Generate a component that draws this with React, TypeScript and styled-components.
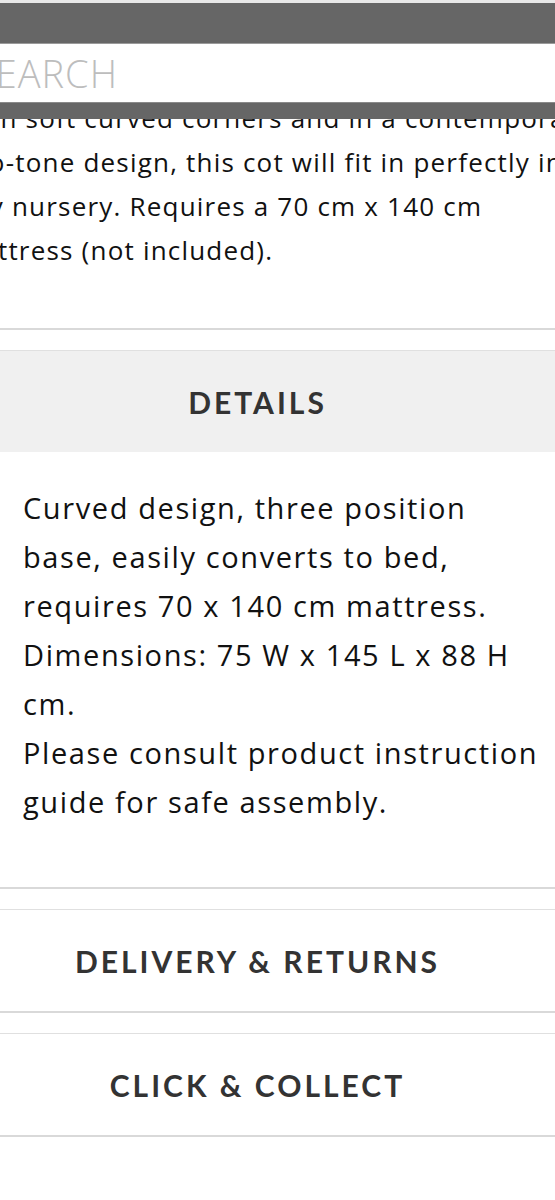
import styled, { createGlobalStyle } from 'styled-components';

const GlobalStyle = createGlobalStyle`
  html, body {
    margin: 0;
    padding: 0;
    background: #fff;
  }
  body {
    font-family: 'Open Sans', Lato, sans-serif;
    color: #111;
    overflow-x: hidden;
  }
`;

const descriptionLines = [
  'With soft curved corners and in a contemporary',
  'two-tone design, this cot will fit in perfectly in',
  'any nursery. Requires a 70 cm x 140 cm',
  'mattress (not included).',
];

const detailLines = [
  'Curved design, three position',
  'base, easily converts to bed,',
  'requires 70 x 140 cm mattress.',
  'Dimensions: 75 W x 145 L x 88 H',
  'cm.',
  'Please consult product instruction',
  'guide for safe assembly.',
];

export default function App() {
  return (
    <Page>
      <GlobalStyle />
      <Header>
        <TopStrip />
        <DarkBar />
        <SearchField>
          <SearchInput placeholder="SEARCH" readOnly />
        </SearchField>
        <DarkBar $short />
      </Header>

      <Description>
        {descriptionLines.map((line) => (
          <Line key={line}>{line}</Line>
        ))}
      </Description>

      <Accordion>
        <Item>
          <ItemHeader $open>DETAILS</ItemHeader>
          <ItemBody>
            {detailLines.map((line) => (
              <Line key={line}>{line}</Line>
            ))}
          </ItemBody>
        </Item>
        <Item>
          <ItemHeader>DELIVERY &amp; RETURNS</ItemHeader>
        </Item>
        <Item>
          <ItemHeader>CLICK &amp; COLLECT</ItemHeader>
        </Item>
      </Accordion>
    </Page>
  );
}

const Page = styled.div`
  position: relative;
  width: 555px;
  min-height: 1200px;
  overflow: hidden;
  background: #fff;
`;

const Header = styled.header`
  position: absolute;
  top: 0;
  left: 0;
  right: 0;
  z-index: 2;
  display: flex;
  flex-direction: column;
`;

const TopStrip = styled.div`
  height: 3px;
  background: #e8e8e8;
`;

const DarkBar = styled.div<{ $short?: boolean }>`
  height: ${(p) => (p.$short ? '16px' : '40px')};
  background: #666;
  border-top: ${(p) => (p.$short ? '1px solid #8a8a8a' : 'none')};
`;

const SearchField = styled.div`
  height: 58px;
  background: #fff;
  border-top: 1px solid #9a9a9a;
  display: flex;
  align-items: center;
  margin-left: -26px;
`;

const SearchInput = styled.input`
  border: none;
  outline: none;
  background: transparent;
  width: 100%;
  padding: 0;
  font-family: 'Open Sans', Lato, sans-serif;
  font-weight: 300;
  font-size: 38px;
  letter-spacing: 1px;
  color: #bdbdbd;

  &::placeholder {
    color: #bdbdbd;
  }
`;

const Description = styled.div`
  margin-left: -43px;
  padding-top: 96px;
  padding-bottom: 56px;
  border-bottom: 2px solid #d9d9d9;
  font-size: 26px;
  line-height: 44px;
  letter-spacing: 1.2px;
  white-space: nowrap;
  color: #111;
`;

const Line = styled.span`
  display: block;
`;

const Accordion = styled.div`
  display: flex;
  flex-direction: column;
`;

const Item = styled.section`
  margin-top: 20px;
  border-top: 1px solid #e0e0e0;
  border-bottom: 2px solid #d9d9d9;
`;

const ItemHeader = styled.h2<{ $open?: boolean }>`
  margin: 0;
  height: 101px;
  display: flex;
  align-items: center;
  justify-content: center;
  padding-right: 40px;
  background: ${(p) => (p.$open ? '#f0f0f0' : '#fff')};
  font-family: Lato, sans-serif;
  font-weight: 700;
  font-size: 30px;
  letter-spacing: 3px;
  color: #333;
`;

const ItemBody = styled.div`
  padding: 31px 0 61px 23px;
  font-size: 29px;
  line-height: 49px;
  letter-spacing: 1.6px;
  white-space: nowrap;
  color: #111;
`;
